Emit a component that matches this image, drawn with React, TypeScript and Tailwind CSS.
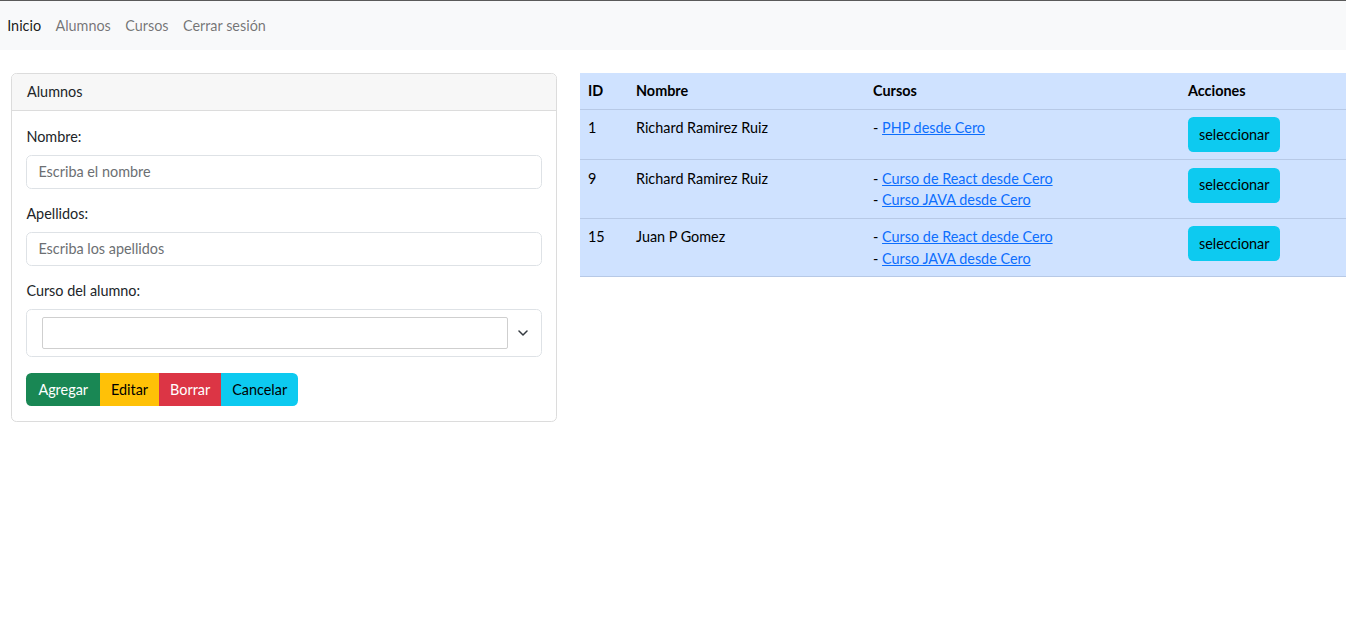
import { useState } from "react"

const font = "font-['Lato','Open_Sans',sans-serif]"

const alumnos = [
  { id: 1, nombre: "Richard Ramirez Ruiz", cursos: ["PHP desde Cero"] },
  {
    id: 9,
    nombre: "Richard Ramirez Ruiz",
    cursos: ["Curso de React desde Cero", "Curso JAVA desde Cero"],
  },
  {
    id: 15,
    nombre: "Juan P Gomez",
    cursos: ["Curso de React desde Cero", "Curso JAVA desde Cero"],
  },
]

function NavBar() {
  return (
    <nav className="flex h-[50px] items-center border-t border-[#5a5a5a] bg-[#f8f9fa] pt-[1px]">
      <a href="#" className="px-[7.2px] text-black/90">
        Inicio
      </a>
      <a href="#" className="px-[7.2px] text-black/55">
        Alumnos
      </a>
      <a href="#" className="px-[7.2px] text-black/55">
        Cursos
      </a>
      <a href="#" className="px-[7.2px] text-black/55">
        Cerrar sesión
      </a>
    </nav>
  )
}

function Formulario() {
  const [nombre, setNombre] = useState("")
  const [apellidos, setApellidos] = useState("")

  return (
    <div className="w-[546px] overflow-hidden rounded-[5.4px] border border-[#dcdcdc] bg-white">
      {/* HEADER */}
      <div className="border-b border-[#dcdcdc] bg-[#f7f7f7] px-[15px] py-[7.2px]">
        Alumnos
      </div>

      {/* BODY */}
      <div className="px-[14.4px] pb-[15.4px] pt-[15px]">
        <label className="mb-[7.2px] block">Nombre:</label>
        <input
          value={nombre}
          onChange={(e) => setNombre(e.target.value)}
          placeholder="Escriba el nombre"
          className="mb-[14.4px] block h-[34px] w-full rounded-[5.4px] border border-[#dee2e6] px-[11px] outline-none placeholder:text-[#6c6f73]"
        />

        <label className="mb-[7.2px] block">Apellidos:</label>
        <input
          value={apellidos}
          onChange={(e) => setApellidos(e.target.value)}
          placeholder="Escriba los apellidos"
          className="mb-[14.4px] block h-[34px] w-full rounded-[5.4px] border border-[#dee2e6] px-[11px] outline-none placeholder:text-[#6c6f73]"
        />

        <label className="mb-[7.2px] block">Curso del alumno:</label>
        <div className="mb-[16px] flex h-[48px] items-center rounded-[5.4px] border border-[#dee2e6] pl-[15px] pr-[13px]">
          <div className="h-[32px] flex-1 rounded-[2px] border border-[#cfcfcf]" />
          <svg width="10" height="6" viewBox="0 0 10 6" className="ml-[10px]">
            <polyline
              points="1,1 5,5 9,1"
              fill="none"
              stroke="#343a40"
              strokeWidth="1.5"
              strokeLinecap="round"
              strokeLinejoin="round"
            />
          </svg>
        </div>

        <div className="flex h-[33px]">
          <button className="rounded-l-[5.4px] bg-[#198754] px-[12px] text-white">
            Agregar
          </button>
          <button className="bg-[#ffc107] px-[11px] text-black">Editar</button>
          <button className="bg-[#dc3545] px-[11px] text-white">Borrar</button>
          <button className="rounded-r-[5.4px] bg-[#0dcaf0] px-[11px] text-black">
            Cancelar
          </button>
        </div>
      </div>
    </div>
  )
}

function Tabla() {
  return (
    <table className="w-[766px] table-fixed border-collapse bg-[#cfe2ff] text-black">
      <colgroup>
        <col className="w-[48px]" />
        <col className="w-[237px]" />
        <col className="w-[315px]" />
        <col />
      </colgroup>
      <thead>
        <tr className="border-b border-[#b7c9e6]">
          <th className="px-[8px] py-[7.2px] text-left font-bold">ID</th>
          <th className="px-[8px] py-[7.2px] text-left font-bold">Nombre</th>
          <th className="px-[8px] py-[7.2px] text-left font-bold">Cursos</th>
          <th className="px-[8px] py-[7.2px] text-left font-bold">Acciones</th>
        </tr>
      </thead>
      <tbody>
        {alumnos.map((a) => (
          <tr key={a.id} className="border-b border-[#b7c9e6] align-top">
            <td className="px-[8px] py-[7.2px]">{a.id}</td>
            <td className="px-[8px] py-[7.2px]">{a.nombre}</td>
            <td className="px-[8px] py-[7.2px]">
              {a.cursos.map((c) => (
                <div key={c}>
                  -{" "}
                  <a href="#" className="text-[#0d6efd] underline">
                    {c}
                  </a>
                </div>
              ))}
            </td>
            <td className="px-[8px] py-[7.2px]">
              <button className="block h-[35px] rounded-[5.4px] bg-[#0dcaf0] px-[11px] text-black">
                seleccionar
              </button>
            </td>
          </tr>
        ))}
      </tbody>
    </table>
  )
}

export default function App() {
  return (
    <div className={`${font} min-h-[623px] bg-white text-[14.4px] leading-[21.6px] text-[#212529]`}>
      <NavBar />
      <div className="flex items-start gap-[23px] pl-[11px] pt-[23px]">
        <Formulario />
        <Tabla />
      </div>
    </div>
  )
}
